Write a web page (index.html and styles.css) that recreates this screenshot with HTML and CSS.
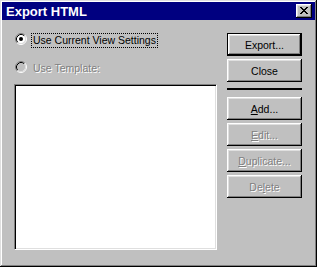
FILE: index.html
```html
<!DOCTYPE html>
<html>
<head>
<meta charset="utf-8">
<title>Export HTML</title>
<link rel="stylesheet" href="styles.css">
</head>
<body>
	<div class="dialog">
		<div class="titlebar">
			<span class="title">Export HTML</span>
			<span class="close-btn">
				<svg width="8" height="7" viewBox="0 0 8 7" shape-rendering="crispEdges">
					<path fill="#000" d="M0 0h2v1h-2zM6 0h2v1h-2zM1 1h2v1h-2zM5 1h2v1h-2zM2 2h4v1h-4zM3 3h2v1h-2zM2 4h4v1h-4zM1 5h2v1h-2zM5 5h2v1h-2zM0 6h2v1h-2zM6 6h2v1h-2z"/>
				</svg>
			</span>
		</div>
		<div class="content">
			<div class="left">
				<div class="radio">
					<svg class="radio-mark" width="12" height="12" viewBox="0 0 12 12">
						<circle cx="6" cy="6" r="4.5" fill="#fff"/>
						<path d="M2.11 9.89A5.5 5.5 0 0 1 9.89 2.11" fill="none" stroke="#808080"/>
						<path d="M9.89 2.11A5.5 5.5 0 0 1 2.11 9.89" fill="none" stroke="#fff"/>
						<path d="M2.82 9.18A4.5 4.5 0 0 1 9.18 2.82" fill="none" stroke="#000"/>
						<path d="M9.18 2.82A4.5 4.5 0 0 1 2.82 9.18" fill="none" stroke="#dfdfdf"/>
						<circle cx="6" cy="6" r="2" fill="#000"/>
					</svg>
					<span class="label focus">Use Current View Settings</span>
				</div>
				<div class="radio disabled">
					<svg class="radio-mark" width="12" height="12" viewBox="0 0 12 12">
						<circle cx="6" cy="6" r="4.5" fill="#c0c0c0"/>
						<path d="M2.11 9.89A5.5 5.5 0 0 1 9.89 2.11" fill="none" stroke="#808080"/>
						<path d="M9.89 2.11A5.5 5.5 0 0 1 2.11 9.89" fill="none" stroke="#fff"/>
						<path d="M2.82 9.18A4.5 4.5 0 0 1 9.18 2.82" fill="none" stroke="#000"/>
						<path d="M9.18 2.82A4.5 4.5 0 0 1 2.82 9.18" fill="none" stroke="#dfdfdf"/>
					</svg>
					<span class="label">Use Template:</span>
				</div>
				<div class="listbox"></div>
			</div>
			<div class="buttons">
				<div class="btn default">Export...</div>
				<div class="btn">Close</div>
				<div class="separator"></div>
				<div class="btn"><u>A</u>dd...</div>
				<div class="btn disabled"><u>E</u>dit...</div>
				<div class="btn disabled"><u>D</u>uplicate...</div>
				<div class="btn disabled">De<u>l</u>ete</div>
			</div>
		</div>
	</div>
</body>
</html>
```

FILE: styles.css
```css
body {
	margin: 0;
	background: #c0c0c0;
	font-family: "Liberation Sans", Arial, sans-serif;
	font-size: 10.5px;
	color: #000;
}
.dialog {
	width: 317px;
	height: 267px;
	box-sizing: border-box;
	padding: 2px;
	background: #c0c0c0;
	box-shadow: inset -1px -1px #000, inset 1px 1px #dfdfdf, inset -2px -2px #808080, inset 2px 2px #fff;
}
.titlebar {
	height: 18px;
	background: #000080;
	color: #fff;
	display: flex;
	align-items: center;
	justify-content: space-between;
	padding: 0 3px 0 4px;
}
.title {
	font-weight: bold;
	font-size: 13px;
}
.close-btn {
	width: 16px;
	height: 14px;
	box-sizing: border-box;
	background: #c0c0c0;
	box-shadow: inset -1px -1px #000, inset 1px 1px #fff, inset -2px -2px #808080, inset 2px 2px #dfdfdf;
	display: flex;
	padding: 3px 0 0 4px;
}
.content {
	display: flex;
	padding: 13px 0 0 12px;
}
.left {
	width: 203px;
}
.radio {
	display: flex;
	align-items: flex-start;
	height: 15px;
	margin-bottom: 13px;
}
.radio-mark {
	margin: 0 4px 0 1px;
	flex: none;
}
.label {
	line-height: 13px;
	padding: 0 1px;
	border: 1px dotted transparent;
}
.label.focus {
	border-color: #000;
}
.radio.disabled .label {
	color: #808080;
	text-shadow: 1px 1px #fff;
}
.radio.disabled {
	margin-bottom: 8px;
}
.listbox {
	width: 203px;
	height: 166px;
	box-sizing: border-box;
	background: #fff;
	border: 1px solid;
	border-color: #808080 #fff #fff #808080;
	box-shadow: inset 1px 1px #000, inset -1px -1px #dfdfdf;
}
.buttons {
	margin-left: 10px;
	width: 75px;
	display: flex;
	flex-direction: column;
	gap: 3px;
}
.btn {
	width: 75px;
	height: 23px;
	box-sizing: border-box;
	display: flex;
	align-items: center;
	justify-content: center;
	background: #c0c0c0;
	box-shadow: inset -1px -1px #000, inset 1px 1px #fff, inset -2px -2px #808080, inset 2px 2px #dfdfdf;
}
.btn.default {
	border: 1px solid #000;
}
.btn.disabled {
	color: #808080;
	text-shadow: 1px 1px #fff;
}
.separator {
	height: 2px;
	background: #000;
	margin: 3px 0 4px;
}
```
